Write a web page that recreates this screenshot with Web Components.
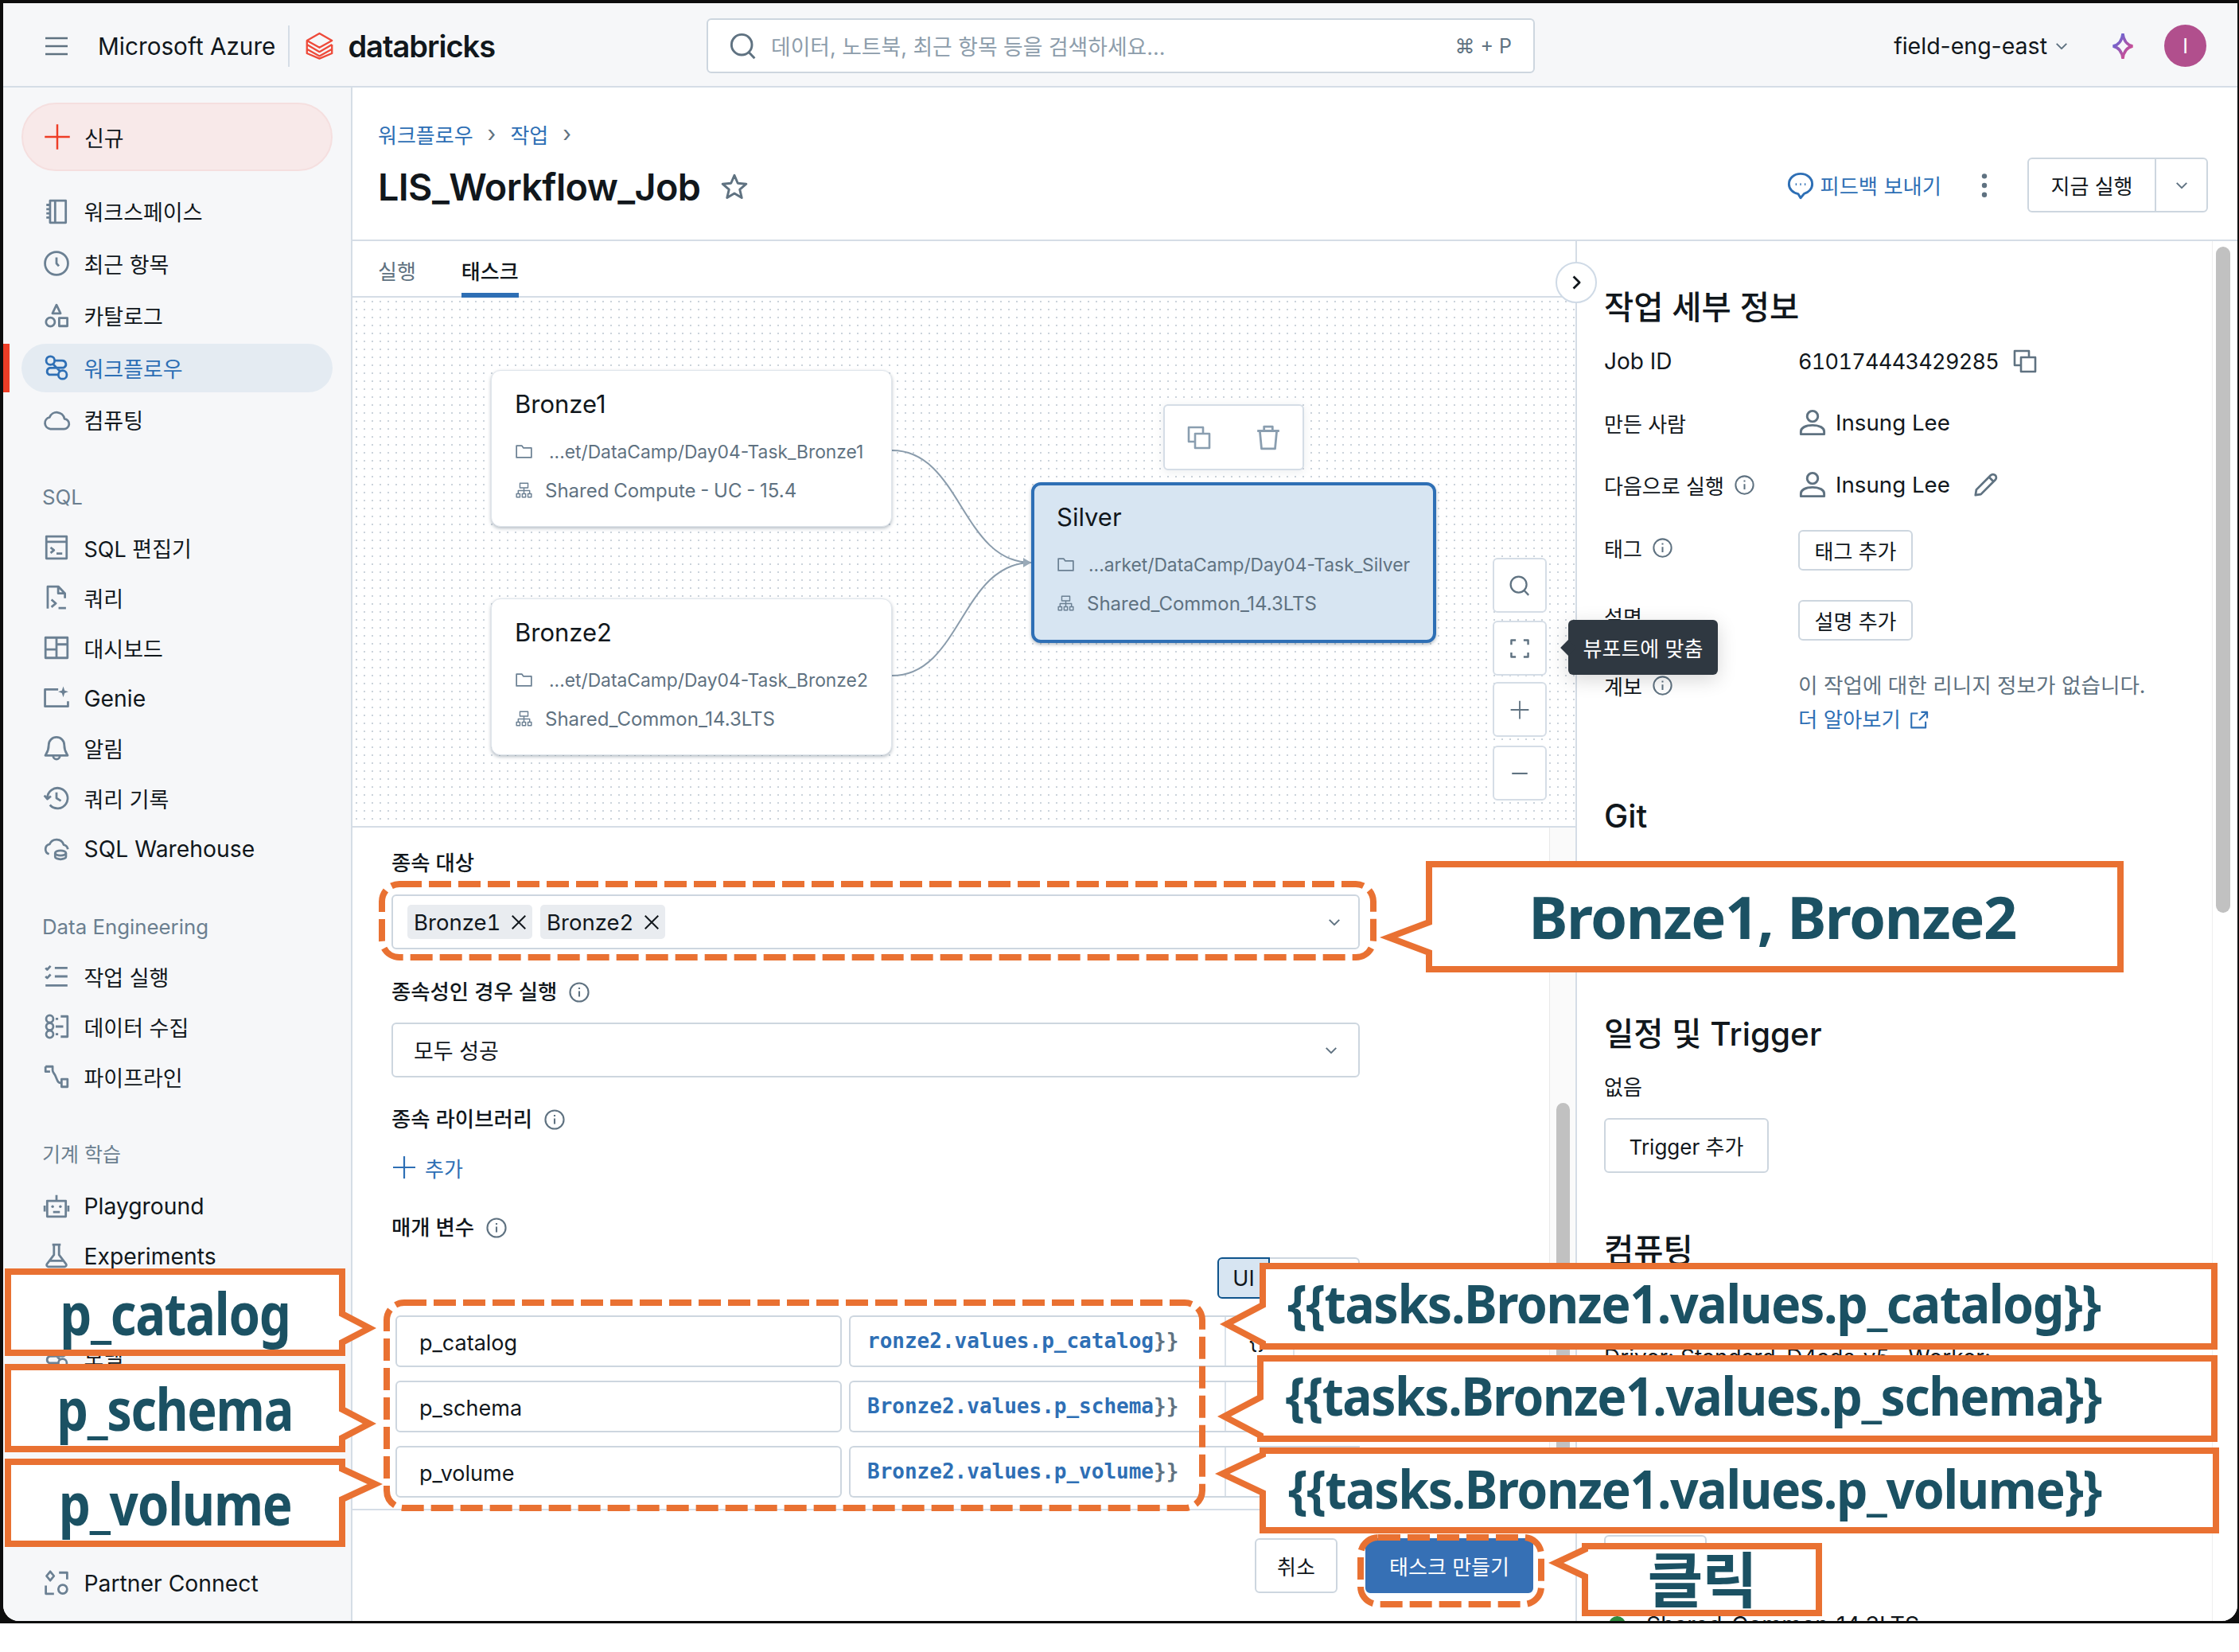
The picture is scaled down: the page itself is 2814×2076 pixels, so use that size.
<!DOCTYPE html>
<html lang="ko">
<head>
<meta charset="utf-8">
<title>LIS_Workflow_Job</title>
<style>
    html, body { margin: 0; background: #fff; }
    body { position: relative; width: 2814px; height: 2076px; overflow: hidden; }
</style>
</head>
<body>
<app-frame>
    <top-bar></top-bar>
    <side-nav slot="nav"></side-nav>
    <job-main slot="main"></job-main>
</app-frame>

<!-- annotations drawn on top of the screenshot -->
<dash-box x="476" y="1107" w="1254" h="100"></dash-box>
<dash-box x="482" y="1633" w="1033" h="266"></dash-box>
<dash-box x="1706" y="1928" w="235" h="92"></dash-box>

<call-out x="1792" y="1082" w="877" h="140" side="left" tipx="1734" tipy="1178" half="19" fs="74" dx="-3">Bronze1, Bronze2</call-out>
<call-out x="6" y="1594" w="428" h="110" side="right" tipx="473" tipy="1669" half="18" fs="74" sx=".857" dy="1">p_catalog</call-out>
<call-out x="6" y="1714" w="428" h="111" side="right" tipx="473" tipy="1789" half="18" fs="74" sx=".85" dy="0">p_schema</call-out>
<call-out x="6" y="1833" w="428" h="111" side="right" tipx="481" tipy="1865" half="19" fs="74" sx=".86" dy="0">p_volume</call-out>
<call-out x="1583" y="1587" w="1204" h="109" side="left" tipx="1533" tipy="1664" half="24" fs="66" sx=".95" dx="-56" dy="-5">{{tasks.Bronze1.values.p_catalog}}</call-out>
<call-out x="1580" y="1703" w="1207" h="109" side="left" tipx="1530" tipy="1780" half="24" fs="66" sx=".944" dx="-56" dy="-5">{{tasks.Bronze1.values.p_schema}}</call-out>
<call-out x="1583" y="1819" w="1206" h="108" side="left" tipx="1527" tipy="1852" half="24" fs="66" sx=".948" dx="-56" dy="-3">{{tasks.Bronze1.values.p_volume}}</call-out>
<call-out x="1988" y="1939" w="302" h="92" side="left" tipx="1946" tipy="1964" half="17" fs="76">클릭</call-out>

<script>
const ICONS = {
    menu: '<path d="M1 3h14M1 8h14M1 13h14"/>',
    plus: '<path d="M8 1v14M1 8h14"/>',
    minus: '<path d="M2 8h12"/>',
    search: '<circle cx="7.2" cy="7.2" r="5.7"/><path d="M11.2 11.4l3.2 3.4"/>',
    star: '<path d="M8 1.5l1.9 4.4 4.7.4-3.6 3.1 1.1 4.6L8 11.6l-4.1 2.4L5 9.4 1.4 6.3l4.7-.4z"/>',
    chevdown: '<path d="M3 5.5l5 5 5-5"/>',
    chevright: '<path d="M5.5 2.5l5.5 5.5-5.5 5.5"/>',
    info: '<circle cx="8" cy="8" r="6.6"/><path d="M8 7.2v4M8 4.5v1.2"/>',
    kebab: '<circle cx="8" cy="2.5" r="1.5" fill="currentColor" stroke="none"/><circle cx="8" cy="8" r="1.5" fill="currentColor" stroke="none"/><circle cx="8" cy="13.5" r="1.5" fill="currentColor" stroke="none"/>',
    feedback: '<path d="M8 1.5c3.7 0 6.5 2.5 6.5 5.7 0 2.6-1.9 4.7-4.5 5.4L8 15l-1.4-2.3C3.6 12.2 1.5 10 1.5 7.2 1.5 4 4.3 1.5 8 1.5z"/><path d="M5.2 7.4h.6M7.7 7.4h.6M10.2 7.4h.6"/>',
    workspace: '<path d="M4.2 1.5h9.3v13H4.2zM7.2 1.5v13M2 4h2.5M2 6.5h2.5M2 9h2.5M2 11.5h2.5"/>',
    clock: '<circle cx="8" cy="8" r="6.8"/><path d="M8 4.5V8l1.4 1.6"/>',
    catalog: '<path d="M8 1.5l2.4 5H5.6z"/><circle cx="4.4" cy="11.6" r="2.6"/><path d="M9.6 9.2h4.8V14H9.6z"/>',
    workflows: '<circle cx="4.4" cy="3.8" r="2.5"/><circle cx="11.6" cy="12.2" r="2.5"/><path d="M7 3.800h4.400a2.200 2.200 0 0 1 .9 4.200L4 8.200a2.100 2.100 0 0 0-.2 4h5.200M5.800 5.800l4.400 4.400"/>',
    cloud: '<path d="M4.400 13.200h7.800a3 3 0 0 0 .5-6 4.600 4.600 0 0 0-8.800-.9 3.500 3.500 0 0 0 .5 6.900z"/>',
    sqleditor: '<path d="M2 1.500h12v13H2zM2 4.600h12M4.500 8l2 1.600-2 1.600M8 11.600h3.400"/>',
    query: '<path d="M2.800 14.500v-13h6.400l3.800 4v2.800M9 1.500v4h4M5 9.200l2.600 2.200L5 13.600M9.200 14.200h4.400"/>',
    dashboard: '<path d="M1.500 2h13v12h-13zM8 2v12M1.500 9h6.500M8 6h6.500"/>',
    genie: '<path d="M9 3H1.200v10h13.600v-3"/><path d="M12 1.200l.8 2.400 2.200.8-2.200.8-.8 2.400-.8-2.400-2.200-.8 2.200-.8z" fill="currentColor" stroke="none"/>',
    bell: '<path d="M8 1.600a4.600 4.600 0 0 0-4.600 4.600c0 3.400-1.300 5-2 6.200h13.200c-.7-1.200-2-2.800-2-6.200A4.600 4.600 0 0 0 8 1.600zM6 12.600a2 2 0 0 0 4 0"/>',
    history: '<path d="M2.600 8a6 6 0 1 1 1.500 4M.8 6.400l1.800 2.100 2.100-1.700M8 4.600V8l2.600 1.600"/>',
    warehouse: '<path d="M3.600 11.400a3 3 0 0 1 .3-5.800 4.500 4.500 0 0 1 8.400.4 3 3 0 0 1 2.400 2.600"/><ellipse cx="10.400" cy="10.800" rx="3.200" ry="1.500"/><path d="M7.200 10.800v2.200c0 .8 1.400 1.500 3.200 1.500s3.200-.7 3.200-1.500v-2.200"/>',
    jobruns: '<path d="M1.500 3l1 1 2-2.200M1.500 8l1 1 2-2.200M7 3h7.500M7 8h7.500M1.500 13.400h13"/>',
    ingest: '<circle cx="4" cy="3.500" r="2.100"/><circle cx="4" cy="8" r="2.100"/><circle cx="4" cy="12.500" r="2.100"/><path d="M10.500 2H14.500v12h-4M7.500 3.500h1.500M7.500 8h4.500M7.500 12.500h1.500"/>',
    pipeline: '<path d="M1.500 2h4.200v2.200c0 1.300 1 1.800 1.500 3l1.300 3c.4 1 1 1.500 2 1.500M1.500 2v3h2.700M11 9.500h3.500V14H11z"/>',
    robot: '<path d="M2.500 5.200h11v9.300h-11zM8 5.200V1.800M1 8v3.500M15 8v3.500M6 11.800h4"/><circle cx="5.700" cy="8.600" r=".8" fill="currentColor" stroke="none"/><circle cx="10.300" cy="8.600" r=".8" fill="currentColor" stroke="none"/>',
    flask: '<path d="M5.500 1.500h5M6.500 1.500v6l-4.200 5.500a1 1 0 0 0 .8 1.500h9.800a1 1 0 0 0 .8-1.500L9.500 7.500v-6M4.200 11h7.600"/>',
    partner: '<path d="M4.300 1.300l2.200 2.700-2.200 2.700L2.100 4zM9.500 2H14.300v4M1.700 9.700V14.500H6.500"/><circle cx="11.700" cy="11.800" r="2.600"/>',
    copy: '<path d="M10.500 5.500V1.500h-9v9h4M5.500 5.500h9v9h-9z"/>',
    trash: '<path d="M1.500 4h13M5.500 4V1.500h5V4M3 4l1 10.500h8L13 4"/>',
    folder: '<path d="M1.500 2.800h4.600l1.500 2h6.900v8.400h-13z"/>',
    compute: '<path d="M4.500 1.500h7v4h-7zM8 5.500V8M3 10.500V8h10v2.500M8 8v2.500M1.500 10.800h3v3h-3zM6.500 10.800h3v3h-3zM11.500 10.800h3v3h-3z"/>',
    person: '<circle cx="8" cy="4.500" r="3"/><path d="M1.500 14.500V13c0-2 2.500-3.500 6.500-3.500s6.500 1.500 6.500 3.500v1.500z"/>',
    pencil: '<path d="M1.800 14.200l.5-3.200L10.800 2.500a1.700 1.700 0 0 1 2.700 2.700L5 13.700zM9.800 3.500l2.700 2.700"/>',
    external: '<path d="M7 2.800H2v11h11V9M9.500 1.800h4.700v4.700M14.200 1.800L8 8"/>',
    focus: '<path d="M1.500 5V1.500H5M11 1.500h3.500V5M14.500 11v3.500H11M5 14.500H1.500V11"/>',
    close: '<path d="M2.500 2.500l11 11M13.500 2.500l-11 11"/>',
    sparkle: '<path d="M8 1c.5 4.200 2.200 6.300 5.500 7-3.300.7-5 2.800-5.500 7-.5-4.200-2.200-6.300-5.500-7 3.300-.7 5-2.800 5.500-7z"/>',
    logo: '<path d="M1.200 5.200L8 1.300l6.800 3.900L8 9 1.200 5.200zM1.200 5.200v2.200L8 11.300l6.800-3.900M1.200 7.400v2.400L8 13.600l6.800-3.800V7.400M1.200 9.800v2.300L8 15l6.800-2.900V9.800"/>'
};

// every element renders its shadow root once, from css() and html()
class ShadowEl extends HTMLElement {
    constructor() {
        super();
        this.attachShadow({ mode: 'open' });
    }
    connectedCallback() {
        this.shadowRoot.innerHTML = `<style>${this.css()}</style>${this.html()}`;
    }
    css() { return ':host { display: block; }'; }
    html() { return '<slot></slot>'; }
}

class UiIcon extends ShadowEl {
    css() {
        const size = this.getAttribute('size') || 32;
        return `:host { display: inline-flex; flex: none; width: ${size}px; height: ${size}px; }
            svg { width: 100%; height: 100%; display: block; overflow: visible; }`;
    }
    html() {
        const sw = this.getAttribute('sw') || 1.3;
        return `<svg viewBox="0 0 16 16" fill="none" stroke="currentColor" stroke-width="${sw}" stroke-linejoin="round">${ICONS[this.getAttribute('name')] || ''}</svg>`;
    }
}

class AppFrame extends ShadowEl {
    css() {
        return `:host {
                display: block; width: 2814px; height: 2040px; box-sizing: border-box;
                background: #0d0d0d; padding: 4px 2px 3px 4px;
                font-family: Inter, "Noto Sans CJK KR", sans-serif; font-size: 27px; color: #11171c;
            }
            .win { height: 100%; background: #fff; border-radius: 0 0 20px 20px; overflow: hidden; display: flex; flex-direction: column; }
            .body { flex: 1; min-height: 0; display: flex; }`;
    }
    html() {
        return `<div class="win"><slot></slot><div class="body"><slot name="nav"></slot><slot name="main"></slot></div></div>`;
    }
}

class TopBar extends ShadowEl {
    css() {
        return `:host { display: flex; align-items: center; height: 106px; box-sizing: border-box; background: #f6f7f9; border-bottom: 2px solid #d5dde6; padding-top: 3px; flex: none; }
            .brand { width: 884px; box-sizing: border-box; padding-left: 51px; display: flex; align-items: center; color: #11171c; }
            .burger { color: #5f7281; margin-right: 36px; }
            .azure { font-size: 29.700px; }
            .sep { width: 2px; height: 52px; background: #d5dde6; margin: 0 19px 0 16px; }
            .logo { color: #ee4a3a; margin-right: 17px; }
            .db { font-size: 38px; font-weight: 600; letter-spacing: -1px; }
            .search { width: 1041px; height: 69px; box-sizing: border-box; background: #fff; border: 2px solid #cdd6df; border-radius: 6px; display: flex; align-items: center; padding: 0 27px 0 26px; color: #5f7281; }
            .ph { margin-left: 17px; font-size: 26.800px; color: #8d9dab; flex: 1; }
            .kbd { font-size: 25px; color: #5f7281; }
            .right { flex: 1; display: flex; align-items: center; justify-content: flex-end; padding-right: 39px; }
            .ws { font-size: 28.500px; }
            .chev { color: #5f7281; margin: 0 49px 0 8px; }
            .spark { margin-right: 34px; }
            .avatar { width: 53px; height: 53px; border-radius: 50%; background: #b14f8d; color: #fff; font-size: 25px; display: flex; align-items: center; justify-content: center; }`;
    }
    html() {
        return `<div class="brand">
                <ui-icon class="burger" name="menu" size="32"></ui-icon>
                <span class="azure">Microsoft Azure</span>
                <span class="sep"></span>
                <ui-icon class="logo" name="logo" size="37" sw="1"></ui-icon>
                <span class="db">databricks</span>
            </div>
            <div class="search">
                <ui-icon name="search" size="36"></ui-icon>
                <span class="ph">데이터, 노트북, 최근 항목 등을 검색하세요...</span>
                <span class="kbd">⌘ + P</span>
            </div>
            <div class="right">
                <span class="ws">field-eng-east</span>
                <ui-icon class="chev" name="chevdown" size="20" sw="1.600"></ui-icon>
                <svg class="spark" width="36" height="36" viewBox="0 0 16 16" fill="none" stroke="url(#sg)" stroke-width="1.500">
                    <defs><linearGradient id="sg" x1="0" y1="0" x2="1" y2="1"><stop offset="0" stop-color="#4a6ee8"/><stop offset="1" stop-color="#f0447c"/></linearGradient></defs>
                    ${ICONS.sparkle}
                </svg>
                <span class="avatar">I</span>
            </div>`;
    }
}

class NavItem extends ShadowEl {
    css() {
        const h = this.getAttribute('h') || 63;
        return `:host { display: flex; position: relative; align-items: center; height: ${h}px; margin-left: 23px; width: 391px; }
            :host([latin]) { font-size: 28.300px; }
            :host([latin]) .t { padding-top: 2px; }
            .pill { display: flex; align-items: center; width: 100%; height: 61px; box-sizing: border-box; padding-left: 25.500px; border-radius: 31px; }
            .ic { width: 36px; display: flex; justify-content: center; margin-right: 17px; color: #6b8093; }
            :host([active]) .pill { background: #e4ebf2; color: #2e6fb5; }
            :host([active]) .ic { color: #2e6fb5; }
            :host([active])::before { content: ""; position: absolute; left: -23px; top: 2px; bottom: 2px; width: 8px; background: #ee3d26; }`;
    }
    html() {
        return `<div class="pill"><span class="ic"><ui-icon name="${this.getAttribute('icon')}" size="34"></ui-icon></span><span class="t"><slot></slot></span></div>`;
    }
}

class NavLabel extends ShadowEl {
    css() {
        return `:host { display: block; height: 40px; line-height: 40px; padding-left: 49px; font-size: 25px; color: #6b7f90; }
            :host([latin]) { font-size: 25.800px; }`;
    }
}

class SideNav extends ShadowEl {
    css() {
        return `:host { display: block; width: 439px; flex: none; box-sizing: border-box; background: #f6f7f9; border-right: 2px solid #d5dde6; padding-top: 19px; overflow: hidden; }
            .new { margin-left: 23px; width: 391px; height: 86px; box-sizing: border-box; border: 2px solid #f5dfdf; border-radius: 43px; background: #f8e9e9; display: flex; align-items: center; padding-left: 25px; margin-bottom: 18px; }
            .new ui-icon { color: #ee3d26; margin-right: 16px; }`;
    }
    html() {
        const item = (icon, text, extra = '') => `<nav-item icon="${icon}" ${extra}>${text}</nav-item>`;
        const tall = 'h="65.500"';
        return `<div class="new"><ui-icon name="plus" size="36" sw="1.100"></ui-icon>신규</div>
            ${item('workspace', '워크스페이스', tall)}
            ${item('clock', '최근 항목', tall)}
            ${item('catalog', '카탈로그', tall)}
            ${item('workflows', '워크플로우', tall + ' active')}
            ${item('cloud', '컴퓨팅', tall)}
            <nav-label latin style="margin: 44.500px 0 11.500px">SQL</nav-label>
            ${item('sqleditor', 'SQL 편집기')}
            ${item('query', '쿼리')}
            ${item('dashboard', '대시보드')}
            ${item('genie', 'Genie', 'latin')}
            ${item('bell', '알림')}
            ${item('history', '쿼리 기록')}
            ${item('warehouse', 'SQL Warehouse', 'latin')}
            <nav-label latin style="margin: 47.500px 0 10.500px">Data Engineering</nav-label>
            ${item('jobruns', '작업 실행')}
            ${item('ingest', '데이터 수집')}
            ${item('pipeline', '파이프라인')}
            <nav-label style="margin: 46.500px 0 12.500px">기계 학습</nav-label>
            ${item('robot', 'Playground', 'latin')}
            ${item('flask', 'Experiments', 'latin')}
            ${item('catalog', '기능')}
            ${item('workflows', '모델')}
            ${item('cloud', '제공')}
            <div style="height:159px"></div>
            ${item('partner', 'Partner Connect', 'latin')}`;
    }
}

class UiButton extends ShadowEl {
    css() {
        const w = this.getAttribute('w');
        const h = this.getAttribute('h') || 69;
        return `:host { display: inline-flex; align-items: center; justify-content: center; box-sizing: border-box; ${w ? `width: ${w}px;` : ''} height: ${h}px; border: 2px solid #cdd6df; border-radius: 6px; background: #fff; font-size: 26px; color: #11171c; flex: none; }
            :host([primary]) { background: #3670b5; border-color: #3670b5; color: #fff; }`;
    }
}

class JobHeader extends ShadowEl {
    css() {
        return `:host { display: flex; justify-content: space-between; height: 193px; flex: none; box-sizing: border-box; border-bottom: 2px solid #d5dde6; padding: 39px 37px 0 32px; background: #fff; }
            .crumb { display: flex; align-items: center; height: 38px; font-size: 26px; color: #2e6fb5; }
            .crumb i { font-style: normal; color: #5f7281; margin: 0 18px; font-size: 28px; line-height: 1; }
            .title { display: flex; align-items: center; height: 60px; margin-top: 18px; }
            h1 { margin: 0; font-size: 46.700px; font-weight: 600; letter-spacing: -.6px; }
            .title ui-icon { margin-left: 25px; color: #5f7281; }
            .actions { display: flex; align-items: center; height: 69px; margin-top: 49px; }
            .fb { display: flex; align-items: center; color: #2e6fb5; font-size: 26.300px; }
            .fb ui-icon { margin-right: 6px; }
            .kebab { color: #5f7281; margin: 0 37px 0 37px; }
            .split { display: flex; width: 227px; height: 69px; box-sizing: border-box; border: 2px solid #cdd6df; border-radius: 6px; }
            .split span { width: 158px; display: flex; align-items: center; justify-content: center; font-size: 26px; border-right: 2px solid #cdd6df; }
            .split div { flex: 1; display: flex; align-items: center; justify-content: center; color: #5f7281; }`;
    }
    html() {
        return `<div>
                <div class="crumb">워크플로우<i>›</i>작업<i>›</i></div>
                <div class="title"><h1>LIS_Workflow_Job</h1><ui-icon name="star" size="36"></ui-icon></div>
            </div>
            <div class="actions">
                <span class="fb"><ui-icon name="feedback" size="36"></ui-icon>피드백 보내기</span>
                <ui-icon class="kebab" name="kebab" size="34"></ui-icon>
                <div class="split"><span>지금 실행</span><div><ui-icon name="chevdown" size="20" sw="1.600"></ui-icon></div></div>
            </div>`;
    }
}

class TabBar extends ShadowEl {
    css() {
        return `:host { display: flex; height: 71px; flex: none; box-sizing: border-box; border-bottom: 2px solid #d5dde6; padding-left: 32px; gap: 57px; font-size: 26px; }
            span { display: flex; align-items: center; height: 71px; box-sizing: border-box; padding-top: 2px; color: #5f7281; }
            span.on { color: #11171c; font-weight: 500; border-bottom: 6px solid #2e6fb5; padding-top: 7px; }`;
    }
    html() {
        return `<span>실행</span><span class="on">태스크</span>`;
    }
}

class FlowNode extends ShadowEl {
    css() {
        return `:host { position: absolute; display: block; box-sizing: border-box; padding: 22px 0 0 29px; background: #fff; border: 1px solid #dfe5eb; border-radius: 12px; box-shadow: 0 2px 4px rgba(70,90,110,.4); color: #5f7281; font-size: 24px; white-space: nowrap; }
            :host([selected]) { background: #d7e5f2; border: 4px solid #2e6fb5; padding: 20px 0 0 28px; }
            .t { height: 40px; line-height: 40px; font-size: 31px; color: #11171c; }
            .r { display: flex; align-items: center; height: 36px; margin-top: 21px; }
            .r + .r { margin-top: 13px; }
            .p { font-size: 22.800px; }
            .c { word-spacing: -1px; }
            ui-icon { color: #6b8093; }`;
    }
    html() {
        const gap1 = this.getAttribute('gap1') || 20;
        const gap2 = this.getAttribute('gap2') || 15;
        return `<div class="t">${this.getAttribute('name')}</div>
            <div class="r"><ui-icon name="folder" size="23" sw="1.200"></ui-icon><span class="p" style="margin-left:${gap1}px">${this.getAttribute('path')}</span></div>
            <div class="r"><ui-icon name="compute" size="23" sw="1"></ui-icon><span class="c" style="margin-left:${gap2}px">${this.getAttribute('cluster')}</span></div>`;
    }
}

class FlowCanvas extends ShadowEl {
    css() {
        return `:host { display: block; position: relative; z-index: 5; height: 666px; flex: none; box-sizing: border-box; border-bottom: 2px solid #d5dde6; background-color: #fff; background-image: radial-gradient(circle, #cbd3db 1.200px, transparent 1.500px); background-size: 10px 10px; }
            .wires { position: absolute; left: 0; top: 0; pointer-events: none; }
            .tool { position: absolute; left: 1019px; top: 134px; width: 177px; height: 83px; box-sizing: border-box; background: #fff; border: 2px solid #d5dde6; border-radius: 6px; box-shadow: 0 2px 12px rgba(60,80,100,.1); display: flex; align-items: center; justify-content: center; gap: 54px; color: #8a9eb0; }
            .zoom { position: absolute; left: 1433px; width: 68px; height: 69px; box-sizing: border-box; background: #fff; border: 2px solid #d5dde6; border-radius: 6px; display: flex; align-items: center; justify-content: center; color: #5f7281; }
            .tip { position: absolute; left: 1528px; top: 405px; width: 188px; height: 69px; background: #2f3841; color: #fff; border-radius: 6px; display: flex; align-items: center; justify-content: center; font-size: 26px; box-shadow: 0 6px 24px rgba(0,0,0,.16); }
            .tip::before { content: ""; position: absolute; left: -7px; top: 28px; width: 14px; height: 14px; background: #2f3841; transform: rotate(45deg); }
            .toggle { position: absolute; left: 1512px; top: -45px; width: 52px; height: 52px; box-sizing: border-box; border-radius: 50%; background: #fff; border: 2px solid #cfdae6; display: flex; align-items: center; justify-content: center; color: #11171c; }`;
    }
    html() {
        return `<svg class="wires" width="1537" height="664" fill="none" stroke="#8a9cac" stroke-width="2">
                <path d="M678 192C765 192 765 333 853 333"/>
                <path d="M678 475C765 475 765 333 853 333"/>
                <path d="M843 327l10 6-10 6z" fill="#9aaab8" stroke="none"/>
            </svg>
            <flow-node name="Bronze1" path="...et/DataCamp/Day04-Task_Bronze1" cluster="Shared Compute - UC - 15.4" style="left:174px;top:91px;width:504px;height:197px"></flow-node>
            <flow-node name="Bronze2" path="...et/DataCamp/Day04-Task_Bronze2" cluster="Shared_Common_14.3LTS" style="left:174px;top:378px;width:504px;height:197px"></flow-node>
            <flow-node selected name="Silver" gap1="17" gap2="15" path="...arket/DataCamp/Day04-Task_Silver" cluster="Shared_Common_14.3LTS" style="left:853px;top:232px;width:509px;height:202px"></flow-node>
            <div class="tool"><ui-icon name="copy" size="32" sw="1.300"></ui-icon><ui-icon name="trash" size="34" sw="1.300"></ui-icon></div>
            <div class="zoom" style="top:327px"><ui-icon name="search" size="28" sw="1.300"></ui-icon></div>
            <div class="zoom" style="top:406px"><ui-icon name="focus" size="26" sw="1.500"></ui-icon></div>
            <div class="zoom" style="top:483px"><ui-icon name="plus" size="26" sw="1.100"></ui-icon></div>
            <div class="zoom" style="top:563px"><ui-icon name="minus" size="26" sw="1.300"></ui-icon></div>
            <div class="tip">뷰포트에 맞춤</div>
            <div class="toggle"><ui-icon name="chevright" size="22" sw="2"></ui-icon></div>`;
    }
}

class FieldLabel extends ShadowEl {
    css() {
        return `:host { display: flex; align-items: center; height: 36px; font-size: 26.400px; font-weight: 500; }
            ui-icon { margin-left: 14px; margin-top: 5px; color: #5f7281; }`;
    }
    html() {
        return `<slot></slot>${this.hasAttribute('info') ? '<ui-icon name="info" size="28" sw="1.200"></ui-icon>' : ''}`;
    }
}

class FormSelect extends ShadowEl {
    css() {
        return `:host { display: flex; align-items: center; justify-content: space-between; width: 1217px; height: 69px; box-sizing: border-box; border: 2px solid #cdd6df; border-radius: 6px; padding: 0 24px 0 26px; font-size: 27px; background: #fff; }
            :host([chips]) { padding-left: 18px; padding-right: 20px; }
            .v { display: flex; align-items: center; gap: 10px; }
            ui-icon { color: #5f7281; }`;
    }
    html() {
        return `<div class="v"><slot></slot></div><ui-icon name="chevdown" size="20" sw="1.600"></ui-icon>`;
    }
}

class ChipTag extends ShadowEl {
    css() {
        return `:host { display: inline-flex; align-items: center; width: 157px; height: 43px; box-sizing: border-box; padding-left: 8px; border-radius: 5px; background: #e9ecf0; font-size: 27.500px; font-variant-numeric: tabular-nums; }
            ui-icon { margin-left: 11px; }`;
    }
    html() {
        return `<slot></slot><ui-icon name="close" size="24" sw="1.300"></ui-icon>`;
    }
}

class ParamRow extends ShadowEl {
    css() {
        return `:host { display: flex; height: 65px; margin-left: 5px; }
            .in { box-sizing: border-box; height: 100%; border: 2px solid #cdd6df; border-radius: 6px; display: flex; align-items: center; background: #fff; overflow: hidden; }
            .key { width: 561px; padding: 3px 0 0 28px; font-size: 27px; }
            .val { width: 642px; margin-left: 9px; position: relative; padding-left: 21px; border-radius: 6px 0 0 6px; border-right: 0; }
            code { font: bold 26px "DejaVu Sans Mono", monospace; color: #2e6fb5; white-space: nowrap; margin-top: -2px; }
            code span { color: #5f7281; }
            .cell { position: absolute; left: 470px; top: 0; bottom: 0; width: 88px; border: solid #dbe2ea; border-width: 0 2px; box-sizing: border-box; padding-left: 28px; display: flex; align-items: center; font-size: 27px; }`;
    }
    html() {
        return `<div class="in key">${this.getAttribute('key')}</div>
            <div class="in val"><code>${this.getAttribute('value')}<span>}}</span></code><div class="cell">{}</div></div>`;
    }
}

class TaskForm extends ShadowEl {
    css() {
        return `:host { display: flex; height: 858px; flex: none; box-sizing: border-box; border-bottom: 2px solid #d5dde6; }
            .content { flex: 1; min-width: 0; padding: 24px 0 0 49px; }
            .track { width: 33px; box-sizing: border-box; background: #fafafa; border-left: 1px solid #e9e9e9; padding-top: 346px; display: flex; justify-content: center; }
            .thumb { width: 17px; height: 500px; border-radius: 9px; background: #c1c1c1; }
            .add { display: flex; align-items: center; height: 36px; margin-top: 27px; color: #2e6fb5; font-size: 26px; }
            .add ui-icon { margin-right: 10px; }
            .seg { display: flex; width: 179px; height: 52px; margin: 22px 0 21px 1038px; }
            .seg b { width: 66px; box-sizing: border-box; font-weight: 400; font-size: 27px; display: flex; align-items: center; justify-content: center; background: #d7e5f2; border: 2px solid #0e538b; border-radius: 6px 0 0 6px; }
            .seg i { flex: 1; box-sizing: border-box; font-style: normal; font-size: 26px; border: 2px solid #cdd6df; border-left: 0; border-radius: 0 6px 6px 0; display: flex; align-items: center; justify-content: center; }
            param-row + param-row { margin-top: 17px; }`;
    }
    html() {
        return `<div class="content">
                <field-label>종속 대상</field-label>
                <form-select chips style="margin-top:24px"><chip-tag>Bronze1</chip-tag><chip-tag>Bronze2</chip-tag></form-select>
                <field-label info style="margin-top:33px">종속성인 경우 실행</field-label>
                <form-select style="margin-top:23px">모두 성공</form-select>
                <field-label info style="margin-top:32px">종속 라이브러리</field-label>
                <div class="add"><ui-icon name="plus" size="32" sw="1.100"></ui-icon>추가</div>
                <field-label info style="margin-top:37px">매개 변수</field-label>
                <div class="seg"><b>UI</b><i>JSON</i></div>
                <param-row key="p_catalog" value="ronze2.values.p_catalog"></param-row>
                <param-row key="p_schema" value="Bronze2.values.p_schema"></param-row>
                <param-row key="p_volume" value="Bronze2.values.p_volume"></param-row>
            </div>
            <div class="track"><div class="thumb"></div></div>`;
    }
}

class TaskPane extends ShadowEl {
    css() {
        return `:host { display: flex; flex-direction: column; width: 1537px; flex: none; }
            .foot { display: flex; justify-content: flex-end; gap: 35px; padding: 35px 53px 0 0; }`;
    }
    html() {
        return `<tab-bar></tab-bar>
            <flow-canvas></flow-canvas>
            <task-form></task-form>
            <div class="foot"><ui-button w="104">취소</ui-button><ui-button w="211" primary>태스크 만들기</ui-button></div>`;
    }
}

class DetailRow extends ShadowEl {
    css() {
        const h = this.getAttribute('h') || 50;
        const lfs = this.getAttribute('lfs') || 26;
        const lift = this.getAttribute('lift') || 0;
        return `:host { display: grid; grid-template-columns: 244px 1fr; min-height: ${h}px; font-size: 26px; }
            .l, .v { display: flex; align-items: center; height: ${h}px; box-sizing: border-box; }
            .l { font-size: ${lfs}px; padding-bottom: ${lift}px; }
            :host([top]) .l { height: 50px; }
            :host([top]) .v { height: auto; display: block; }
            .l ui-icon { margin-left: 12px; color: #5f7281; }`;
    }
    html() {
        const info = this.hasAttribute('info') ? '<ui-icon name="info" size="27" sw="1.200"></ui-icon>' : '';
        return `<div class="l">${this.getAttribute('label')}${info}</div><div class="v"><slot></slot></div>`;
    }
}

class DetailPanel extends ShadowEl {
    css() {
        return `:host { display: block; position: relative; flex: 1; min-width: 0; box-sizing: border-box; border-left: 2px solid #d5dde6; padding: 59px 0 0 34px; overflow: hidden; font-size: 26px; }
            h2 { margin: 0; height: 50px; line-height: 50px; font-size: 40.500px; font-weight: 500; }
            ui-icon { color: #5f7281; }
            .person { display: inline-flex; align-items: center; gap: 11px; font-size: 27.700px; }
            .job { font-size: 27px; font-variant-numeric: tabular-nums; letter-spacing: -.7px; }
            .job + ui-icon { margin-left: 17px; }
            .muted { color: #5f7281; height: 43px; line-height: 43px; margin-top: 4px; font-size: 26.600px; }
            .link { color: #2e6fb5; height: 43px; line-height: 43px; display: flex; align-items: center; font-size: 26.400px; }
            .link ui-icon { color: #2e6fb5; margin-left: 10px; }
            .bar { position: absolute; right: 0; top: 0; bottom: 0; width: 32px; box-sizing: border-box; border-left: 1px solid #efefef; background: #fff; display: flex; justify-content: center; padding: 7px 5px 0 0; }
            .bar div { width: 18px; height: 837px; border-radius: 9px; background: #c1c1c1; }
            .dot { width: 21px; height: 21px; border-radius: 50%; background: #2e8b3e; margin: 0 26px 0 6px; }`;
    }
    html() {
        return `<h2>작업 세부 정보</h2>
            <detail-row label="Job ID" lfs="28" style="margin-top:17px"><span class="job">610174443429285</span><ui-icon name="copy" size="32" sw="1.300"></ui-icon></detail-row>
            <detail-row label="만든 사람" style="margin-top:27px"><span class="person"><ui-icon name="person" size="36"></ui-icon>Insung Lee</span></detail-row>
            <detail-row label="다음으로 실행" info style="margin-top:28px"><span class="person"><ui-icon name="person" size="36"></ui-icon>Insung Lee</span><ui-icon name="pencil" size="34" style="margin-left:28px"></ui-icon></detail-row>
            <detail-row label="태그" info h="51" lift="6" style="margin-top:32px"><ui-button w="144" h="51">태그 추가</ui-button></detail-row>
            <detail-row label="설명" h="51" lift="10" style="margin-top:37px"><ui-button w="144" h="51">설명 추가</ui-button></detail-row>
            <detail-row label="계보" info top style="margin-top:31px">
                <div class="muted">이 작업에 대한 리니지 정보가 없습니다.</div>
                <div class="link">더 알아보기<ui-icon name="external" size="26"></ui-icon></div>
            </detail-row>
            <h2 style="margin-top:75px">Git</h2>
            <h2 style="margin-top:224px">일정 및 Trigger</h2>
            <div style="height:40px;line-height:40px;margin-top:22px;font-size:26px">없음</div>
            <ui-button w="207" style="margin-top:18px">Trigger 추가</ui-button>
            <h2 style="margin-top:73px">컴퓨팅</h2>
            <div style="height:40px;line-height:40px;margin-top:89px;font-size:28px">Driver: Standard_D4ads_v5 · Worker:</div>
            <ui-button w="129" h="60" style="display:flex;margin-top:203px"></ui-button>
            <div style="display:flex;align-items:center;height:36px;margin-top:34px;font-size:28.500px"><span class="dot"></span>Shared_Common_14.3LTS</div>
            <div class="bar"><div></div></div>`;
    }
}

class JobMain extends ShadowEl {
    css() {
        return `:host { display: flex; flex-direction: column; flex: 1; min-width: 0; }
            .split { display: flex; flex: 1; min-height: 0; }`;
    }
    html() {
        return `<job-header></job-header><div class="split"><task-pane></task-pane><detail-panel></detail-panel></div>`;
    }
}

// orange box with a pointer, placed over the screenshot
class CallOut extends ShadowEl {
    css() {
        const [x, y, w, h] = ['x', 'y', 'w', 'h'].map(a => +this.getAttribute(a));
        const sx = this.getAttribute('sx') || 1;
        const dx = this.getAttribute('dx') || 0;
        const dy = this.getAttribute('dy') || 0;
        return `:host { position: absolute; left: ${x}px; top: ${y}px; width: ${w}px; height: ${h}px; z-index: 20; display: block; }
            svg { position: absolute; left: 0; top: 0; overflow: visible; }
            .txt { position: absolute; inset: 0; display: flex; align-items: center; justify-content: center; white-space: nowrap;
                font-family: "Noto Sans", "Noto Sans CJK KR", sans-serif; font-weight: 700; font-size: ${this.getAttribute('fs')}px; line-height: 1; color: #1b5163; letter-spacing: -1.500px; }
            .txt span { display: block; transform: translate(${dx}px, ${dy}px) scaleX(${sx}); }`;
    }
    html() {
        const [x, y, w, h] = ['x', 'y', 'w', 'h'].map(a => +this.getAttribute(a));
        const half = +this.getAttribute('half');
        const tipY = +this.getAttribute('tipy') - y;
        const tipX = +this.getAttribute('tipx') - x;
        const l = 4, t = 4, r = w - 4, b = h - 4;
        const left = this.getAttribute('side') === 'left';
        // the mitre of the stroke sticks out past the path, so pull the path tip back
        const reach = left ? l - tipX : tipX - r;
        let d = reach;
        for (let i = 0; i < 5; i++) d = reach - 4 * Math.hypot(half, d) / half;
        const path = left
            ? `M${l} ${t}H${r}V${b}H${l}V${tipY + half}L${l - d} ${tipY}L${l} ${tipY - half}Z`
            : `M${l} ${t}H${r}V${tipY - half}L${r + d} ${tipY}L${r} ${tipY + half}V${b}H${l}Z`;
        return `<svg width="${w}" height="${h}"><path d="${path}" fill="#fff" stroke="#e97132" stroke-width="8" stroke-miterlimit="8"/></svg><div class="txt"><span><slot></slot></span></div>`;
    }
}

class DashBox extends ShadowEl {
    css() {
        const [x, y, w, h] = ['x', 'y', 'w', 'h'].map(a => +this.getAttribute(a));
        return `:host { position: absolute; left: ${x}px; top: ${y}px; width: ${w}px; height: ${h}px; z-index: 10; display: block; pointer-events: none; }
            svg { display: block; overflow: visible; }`;
    }
    html() {
        const w = +this.getAttribute('w');
        const h = +this.getAttribute('h');
        return `<svg width="${w}" height="${h}"><rect x="4" y="4" width="${w - 8}" height="${h - 8}" rx="22" fill="none" stroke="#e97132" stroke-width="8" stroke-dasharray="28 9"/></svg>`;
    }
}

const tags = {
    'ui-icon': UiIcon, 'app-frame': AppFrame, 'top-bar': TopBar, 'nav-item': NavItem, 'nav-label': NavLabel,
    'side-nav': SideNav, 'ui-button': UiButton, 'job-header': JobHeader, 'tab-bar': TabBar, 'flow-node': FlowNode,
    'flow-canvas': FlowCanvas, 'field-label': FieldLabel, 'form-select': FormSelect, 'chip-tag': ChipTag,
    'param-row': ParamRow, 'task-form': TaskForm, 'task-pane': TaskPane, 'detail-row': DetailRow,
    'detail-panel': DetailPanel, 'job-main': JobMain, 'call-out': CallOut, 'dash-box': DashBox
};
Object.entries(tags).forEach(([tag, cls]) => customElements.define(tag, cls));
</script>
</body>
</html>
